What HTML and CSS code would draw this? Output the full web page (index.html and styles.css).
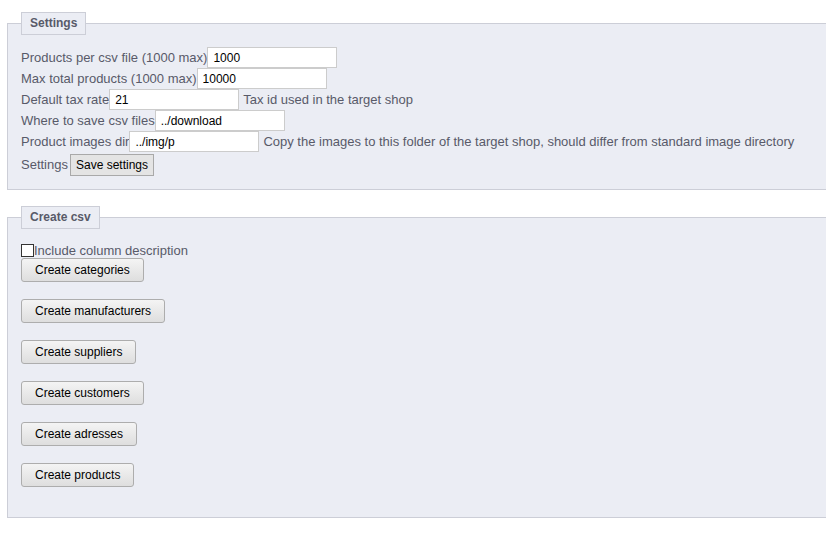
FILE: index.html
```html
<!DOCTYPE html>
<html>
<head>
<meta charset="utf-8">
<link rel="stylesheet" href="styles.css">
</head>
<body>
<div class="page">
  <fieldset class="box box-settings">
    <legend>Settings</legend>
    <div class="rows">
      <div class="row"><span>Products per csv file (1000 max)</span><input class="field" type="text" value="1000"></div>
      <div class="row"><span>Max total products (1000 max)</span><input class="field" type="text" value="10000"></div>
      <div class="row"><span>Default tax rate</span><input class="field" type="text" value="21"><span class="hint">Tax id used in the target shop</span></div>
      <div class="row"><span>Where to save csv files</span><input class="field" type="text" value="../download"></div>
      <div class="row"><span>Product images dir</span><input class="field" type="text" value="../img/p"><span class="hint">Copy the images to this folder of the target shop, should differ from standard image directory</span></div>
      <div class="row row-btn"><span>Settings</span><button class="save">Save settings</button></div>
    </div>
  </fieldset>

  <fieldset class="box box-create">
    <legend>Create csv</legend>
    <label class="check"><input type="checkbox"><span>Include column description</span></label>
    <div class="actions">
      <button class="action">Create categories</button>
      <button class="action">Create manufacturers</button>
      <button class="action">Create suppliers</button>
      <button class="action">Create customers</button>
      <button class="action">Create adresses</button>
      <button class="action">Create products</button>
    </div>
  </fieldset>
</div>
</body>
</html>
```

FILE: styles.css
```css
html, body {
  margin: 0;
  padding: 0;
  background: #ffffff;
  overflow: hidden;
}

body {
  font-family: "Liberation Sans", Arial, sans-serif;
  font-size: 13px;
  color: #585a69;
}

.page {
  padding: 12px 0 0 7px;
  display: flex;
  flex-direction: column;
  gap: 16px;
}

.box {
  margin: 0 -40px 0 0;
  padding: 0 0 0 13px;
  border: 1px solid #ccced7;
  background: #ebedf4;
  min-width: 0;
}

.box legend {
  font-weight: bold;
  font-size: 12px;
  color: #585a69;
  background: #ebedf4;
  border: 1px solid #ccced7;
  padding: 0 8px;
  height: 21px;
  line-height: 20px;
  box-sizing: content-box;
}

.box-settings {
  padding-top: 12px;
  padding-bottom: 13px;
}

.rows {
  display: flex;
  flex-direction: column;
}

.row {
  display: flex;
  align-items: center;
  height: 21px;
  white-space: nowrap;
}

.row-btn {
  height: 23px;
  margin-top: 1px;
}

.field {
  width: 130px;
  height: 21px;
  box-sizing: border-box;
  border: 1px solid #cccccc;
  background: #ffffff;
  padding: 0 5px;
  margin: 0;
  font-family: "Liberation Sans", Arial, sans-serif;
  font-size: 12px;
  color: #000000;
  outline: none;
}

.hint {
  margin-left: 4px;
}

.save {
  margin: 0 0 0 2px;
  height: 22px;
  padding: 0 5px;
  border: 1px solid #a9a9a9;
  background: #e4e4e4;
  font-family: "Liberation Sans", Arial, sans-serif;
  font-size: 12px;
  color: #000000;
  border-radius: 0;
}

.box-create {
  padding-top: 14px;
  padding-bottom: 30px;
}

.check {
  display: flex;
  align-items: center;
  height: 14px;
}

.check input {
  appearance: none;
  -webkit-appearance: none;
  width: 13px;
  height: 13px;
  margin: 0;
  border: 1px solid #333333;
  background: #ffffff;
  box-sizing: border-box;
}

.actions {
  display: flex;
  flex-direction: column;
  align-items: flex-start;
  gap: 17px;
  margin-top: 1px;
}

.action {
  height: 24px;
  padding: 0 13px;
  margin: 0;
  border: 1px solid #adadad;
  border-radius: 3px;
  background: linear-gradient(#f4f4f4, #dedede);
  font-family: "Liberation Sans", Arial, sans-serif;
  font-size: 12px;
  color: #000000;
}
```
